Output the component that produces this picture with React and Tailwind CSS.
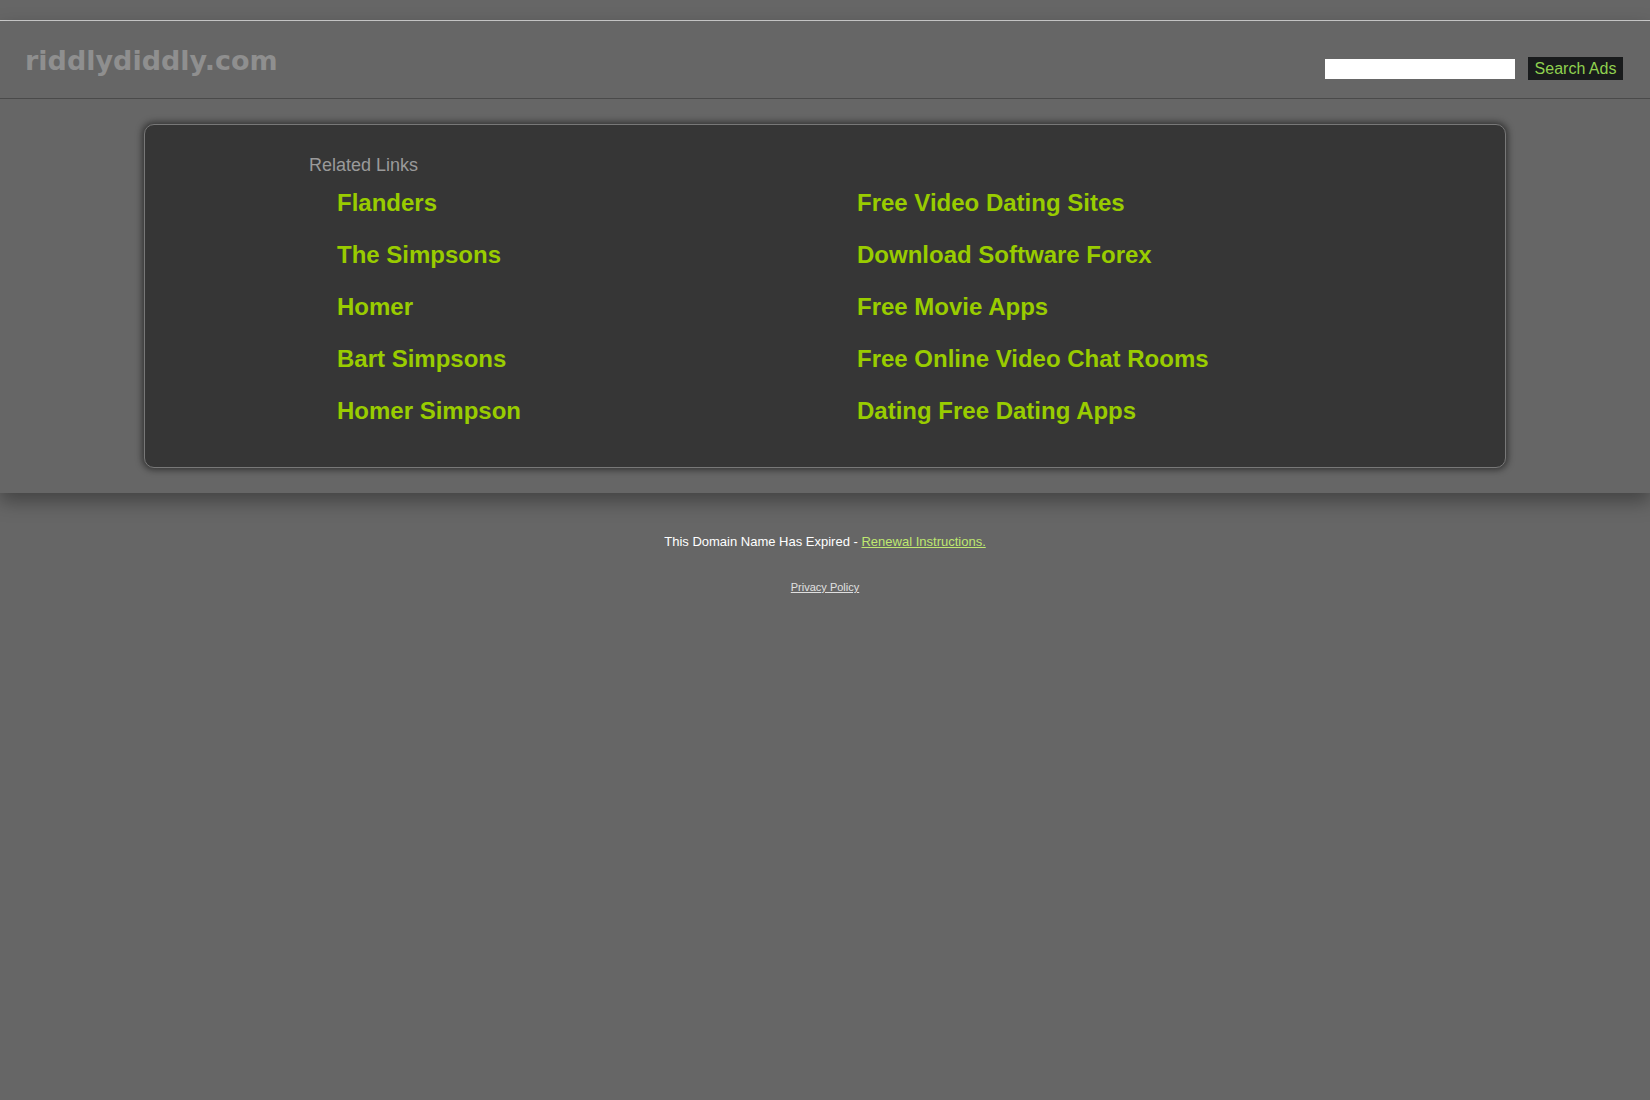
const leftLinks = ["Flanders", "The Simpsons", "Homer", "Bart Simpsons", "Homer Simpson"];
const rightLinks = [
  "Free Video Dating Sites",
  "Download Software Forex",
  "Free Movie Apps",
  "Free Online Video Chat Rooms",
  "Dating Free Dating Apps",
];

function LinkColumn({ items }) {
  return (
    <ul>
      {items.map((label) => (
        <li key={label} className="h-[52px] leading-[52px]">
          <a href="#" className="text-[24px] font-bold text-[#99cc00] hover:underline">
            {label}
          </a>
        </li>
      ))}
    </ul>
  );
}

export default function App() {
  return (
    <div className="min-h-[1100px] bg-[#666666] font-['Liberation_Sans',Arial,sans-serif]">
      {/* top strip */}
      <div className="h-[21px] border-b border-[#d0d0d0]" />

      {/* band: header + related links */}
      <div className="relative bg-[#666666] shadow-[0_8px_18px_rgba(0,0,0,0.35)] pb-[25px]">
        <header className="h-[78px] border-b border-[#4a4a4a] flex items-start justify-between">
          <div className="pl-[25px] pt-[24px] font-['DejaVu_Sans',Verdana,sans-serif] font-bold text-[27px] leading-[32px] text-[#8f8f8f]">
            riddlydiddly.com
          </div>
          <form className="flex items-center pt-[36px] pr-[27px]" onSubmit={(e) => e.preventDefault()}>
            <input type="text" className="w-[190px] h-[20px] bg-white border-0 outline-none px-1 text-[13px]" />
            <button
              type="submit"
              className="ml-[13px] w-[95px] h-[23px] bg-[#191b1c] text-[#8fd14f] text-[16px] leading-[23px]"
            >
              Search Ads
            </button>
          </form>
        </header>

        <div className="mt-[25px] mx-auto w-[1362px] h-[344px] bg-[#363636] border border-[#787878] rounded-[10px] shadow-[0_0_6px_2px_rgba(20,20,20,0.6)] pt-[30px]">
          <div className="w-[1032px] mx-auto">
            <div className="text-[18px] leading-[21px] text-[#9a9a9a]">Related Links</div>
            <div className="mt-[1px] pl-[28px] grid grid-cols-[520px_1fr]">
              <LinkColumn items={leftLinks} />
              <LinkColumn items={rightLinks} />
            </div>
          </div>
        </div>
      </div>

      {/* footer */}
      <div className="pt-[41px] text-center">
        <p className="text-[13px] leading-[15px] text-white">
          This Domain Name Has Expired -{" "}
          <a href="#" className="underline text-[#bfe870]">
            Renewal Instructions.
          </a>
        </p>
        <p className="mt-[32px] text-[11px] leading-[13px]">
          <a href="#" className="underline text-[#e0e0e0]">
            Privacy Policy
          </a>
        </p>
      </div>
    </div>
  );
}
